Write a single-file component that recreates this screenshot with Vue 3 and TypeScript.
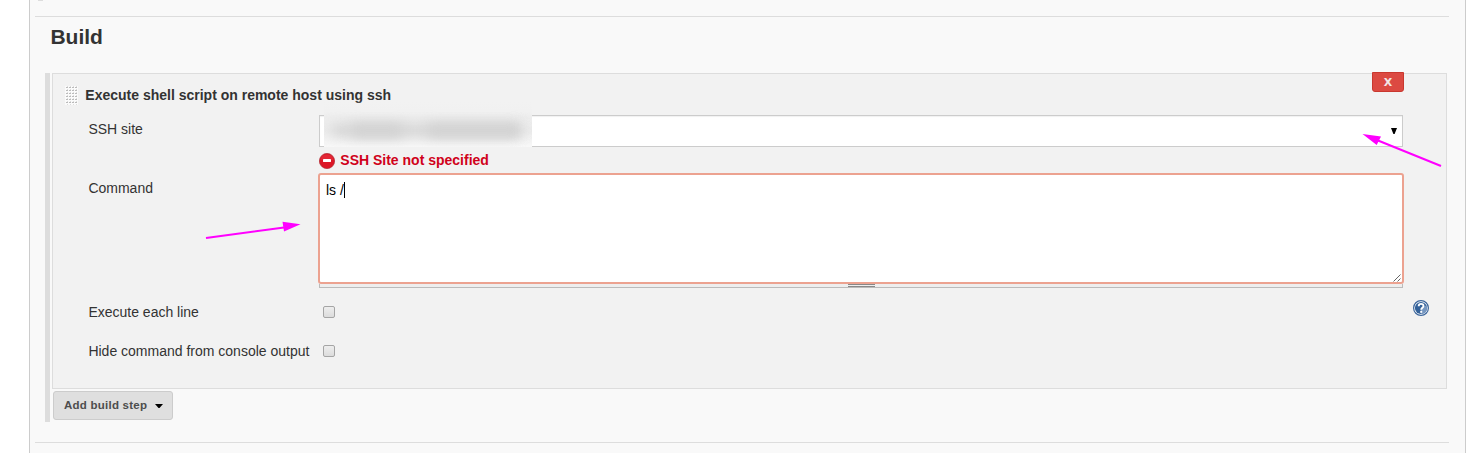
<script setup lang="ts">
import { ref } from 'vue'

const command = ref('ls /')
const eachLine = ref(false)
const hideCommand = ref(false)
</script>

<template>
  <main class="panel">
    <i class="previous-bar"></i>
    <section class="section">
      <h2>Build</h2>
      <div class="steps">
        <article class="step">
          <header class="step-head">
            <svg class="drag" width="13" height="19" viewBox="0 0 13 19">
              <defs>
                <pattern id="grip" width="3" height="3" patternUnits="userSpaceOnUse">
                  <rect width="3" height="3" fill="#fbfbfb" />
                  <rect x="1" y="1" width="2" height="1" fill="#bbb" />
                  <rect x="2" y="0" width="1" height="1" fill="#ddd" />
                </pattern>
              </defs>
              <rect width="13" height="19" fill="url(#grip)" />
            </svg>
            <strong>Execute shell script on remote host using ssh</strong>
            <button class="delete" type="button">X</button>
          </header>

          <div class="row site-row">
            <label>SSH site</label>
            <div class="select">
              <span class="redaction"><i class="smudge base"></i><i class="smudge one"></i><i class="smudge two"></i></span>
              <svg class="caret" width="6" height="6" viewBox="0 0 6 6"><path d="M0 0H6L3.6 6H2.4Z" fill="#000" /></svg>
            </div>
          </div>

          <div class="error">
            <svg width="16" height="16" viewBox="0 0 16 16">
              <circle cx="8" cy="8" r="7.6" fill="#dc1626" stroke="#b5303a" stroke-width=".8" />
              <path d="M1.5 7A6.6 6.6 0 0 1 14.5 7Z" fill="#e93644" opacity=".5" />
              <rect x="4" y="6" width="8" height="3" rx=".4" fill="#fff" />
            </svg>
            <span>SSH Site not specified</span>
          </div>

          <div class="row command-row">
            <label>Command</label>
            <div class="editor">
              <div class="textarea">{{ command }}<i class="cursor"></i>
                <svg class="resize" width="8" height="8" viewBox="0 0 8 8"><path d="M.5 7.5 7.5.5M4.5 7.5 7.5 4.5" stroke="#555" fill="none" stroke-width=".9" /></svg>
              </div>
              <div class="handle"><i></i></div>
            </div>
          </div>

          <div class="row line-row">
            <label>Execute each line</label>
            <span class="check" role="checkbox" :aria-checked="eachLine"></span>
            <svg class="help" width="16" height="16" viewBox="0 0 16 16">
              <circle cx="8" cy="8" r="7.4" fill="#fff" stroke="#3b659b" stroke-width="1.2" />
              <circle cx="8" cy="8" r="6.1" fill="#336199" />
              <path d="M8 8 13.5 5.2A6.1 6.1 0 0 1 8 14.1Z" fill="#7596c0" />
              <path d="M5.7 6.2C5.7 3.2 10.5 3.2 10.5 5.9 10.5 7.7 8.2 7.7 8.2 9.7" stroke="#fff" stroke-width="1.9" fill="none" />
              <rect x="7.2" y="10.8" width="2" height="2" fill="#fff" />
            </svg>
          </div>

          <div class="row hide-row">
            <label>Hide command from console output</label>
            <span class="check" role="checkbox" :aria-checked="hideCommand"></span>
          </div>
        </article>
        <button class="add" type="button">
          <span>Add build step</span>
          <svg width="8" height="4" viewBox="0 0 8 4"><path d="M0 0H8L4.5 4H3.5Z" fill="#000" /></svg>
        </button>
      </div>
    </section>

    <svg class="arrows" width="1480" height="453" viewBox="0 0 1480 453" fill="#f0f" stroke="#f0f">
      <path d="M206 238 284 227.4M1441 166 1378 140.5" stroke-width="2" fill="none" />
      <path d="M300.5 224.2 282.5 221.8 284 231.4ZM1362.5 134 1381 136.5 1376.7 145Z" stroke="none" />
    </svg>
  </main>
</template>

<style>
body {
  margin: 0;
  background: #fff;
  overflow: hidden;
}
</style>

<style scoped>
* {
  box-sizing: border-box;
}
.panel {
  width: 1437px;
  height: 453px;
  margin-left: 29px;
  padding: 0 16px 0 5px;
  border: solid #ccc;
  border-width: 0 1px;
  background: #f9f9f9;
  color: #333;
  font: 14px/18px "Liberation Sans", Arial, sans-serif;
  overflow: hidden;
}
.previous-bar {
  display: block;
  width: 5px;
  height: 1px;
  margin: 0 0 15px 3px;
  background: #ddd;
}
.section {
  height: 427px;
  border: solid #ddd;
  border-width: 1px 0;
  padding: 8px 2px 0 10px;
}
h2 {
  margin: 0 0 24px 5.4px;
  font-size: 21px;
  line-height: 24px;
}
.steps {
  height: 349px;
  border-left: 5px solid #ddd;
  padding-left: 2px;
}
.step {
  width: 1395px;
  height: 316px;
  border: 1px solid #ddd;
  background: #f2f2f2;
}
.step-head {
  display: flex;
  height: 41px;
  padding-left: 12px;
}
.drag {
  margin-top: 12px;
}
.step-head strong {
  margin: 12px auto 0 7.3px;
}
.delete {
  width: 32px;
  height: 20px;
  margin: -2px 42px 0 0;
  padding: 2px 0 0;
  border: 1px solid #c9382f;
  border-radius: 0 0 3px 3px;
  background: #dc4a42;
  color: #f3e6e6;
  font: bold 11px/16px "DejaVu Sans", sans-serif;
}
.row {
  display: grid;
  grid-template-columns: 231px 1084px 36px;
  margin-left: 35px;
  align-items: start;
}
.row label {
  padding-left: .4px;
}
.site-row {
  height: 37px;
}
.site-row label {
  padding-top: 5px;
}
.select {
  display: flex;
  justify-content: space-between;
  align-items: center;
  height: 32px;
  padding-right: 5px;
  border: 1px solid #ccc;
  background: #fff;
  box-shadow: inset 0 1px 1px rgba(0, 0, 0, .06);
}
.redaction {
  position: relative;
  width: 208px;
  height: 46px;
  margin: -14px 0 0 4px;
  background: linear-gradient(rgba(242, 242, 242, 0), #f1f1f1 22%, #ededed 36%, #ebebeb 65%, #f8f8f8);
  overflow: hidden;
}
.smudge {
  position: absolute;
  top: 23px;
  height: 13px;
  background: #d2d2d2;
  filter: blur(6px);
}
.base {
  left: 8px;
  width: 188px;
  opacity: .8;
}
.one {
  left: 28px;
  width: 50px;
}
.two {
  left: 104px;
  width: 92px;
}
.error {
  display: flex;
  align-items: center;
  height: 21px;
  margin-left: 266px;
  gap: 5.3px;
  color: #d0021b;
  font-weight: bold;
}
.error span {
  margin-top: -5px;
}
.error svg {
  margin-top: -3px;
}
.command-row {
  height: 129px;
}
.command-row label {
  padding-top: 6px;
}
.editor {
  margin: 0 -1px;
}
.textarea {
  position: relative;
  height: 111px;
  padding: 6px;
  border: 2px solid #eca290;
  border-radius: 3px;
  background: #fff;
  color: #000;
}
.cursor {
  display: inline-block;
  width: 1px;
  height: 16px;
  vertical-align: -3px;
  background: #000;
}
.resize {
  position: absolute;
  right: 1px;
  bottom: 0;
}
.handle {
  height: 4px;
  margin: 0 1px;
  border: solid #bbb;
  border-width: 0 1px 1px;
  background: #eee;
}
.handle i {
  display: block;
  width: 27px;
  height: 3px;
  margin: 0 auto;
  border: solid #888;
  border-width: 1px 0;
}
.line-row {
  height: 39px;
}
.line-row label,
.hide-row label {
  padding-top: 1px;
}
.check {
  width: 12px;
  height: 12px;
  margin: 4px 0 0 4px;
  border: 1px solid #a5a5a5;
  border-radius: 2px;
  background: linear-gradient(#eee, #dcdcdc);
}
.help {
  margin: -2px 0 0 10px;
}
.add {
  display: flex;
  align-items: center;
  justify-content: space-between;
  width: 120px;
  height: 29px;
  margin: 2px 0 0 1px;
  padding: 0 9px 0 10px;
  border: 1px solid #ccc;
  border-radius: 3px;
  background: #dfdfdf;
  color: #4d4d4d;
  font: bold 11.5px/16px "Liberation Sans", Arial, sans-serif;
  letter-spacing: .24px;
  white-space: nowrap;
}
.add span {
  margin-top: -2px;
}
.arrows {
  position: absolute;
  left: 0;
  top: 0;
  pointer-events: none;
}
</style>
